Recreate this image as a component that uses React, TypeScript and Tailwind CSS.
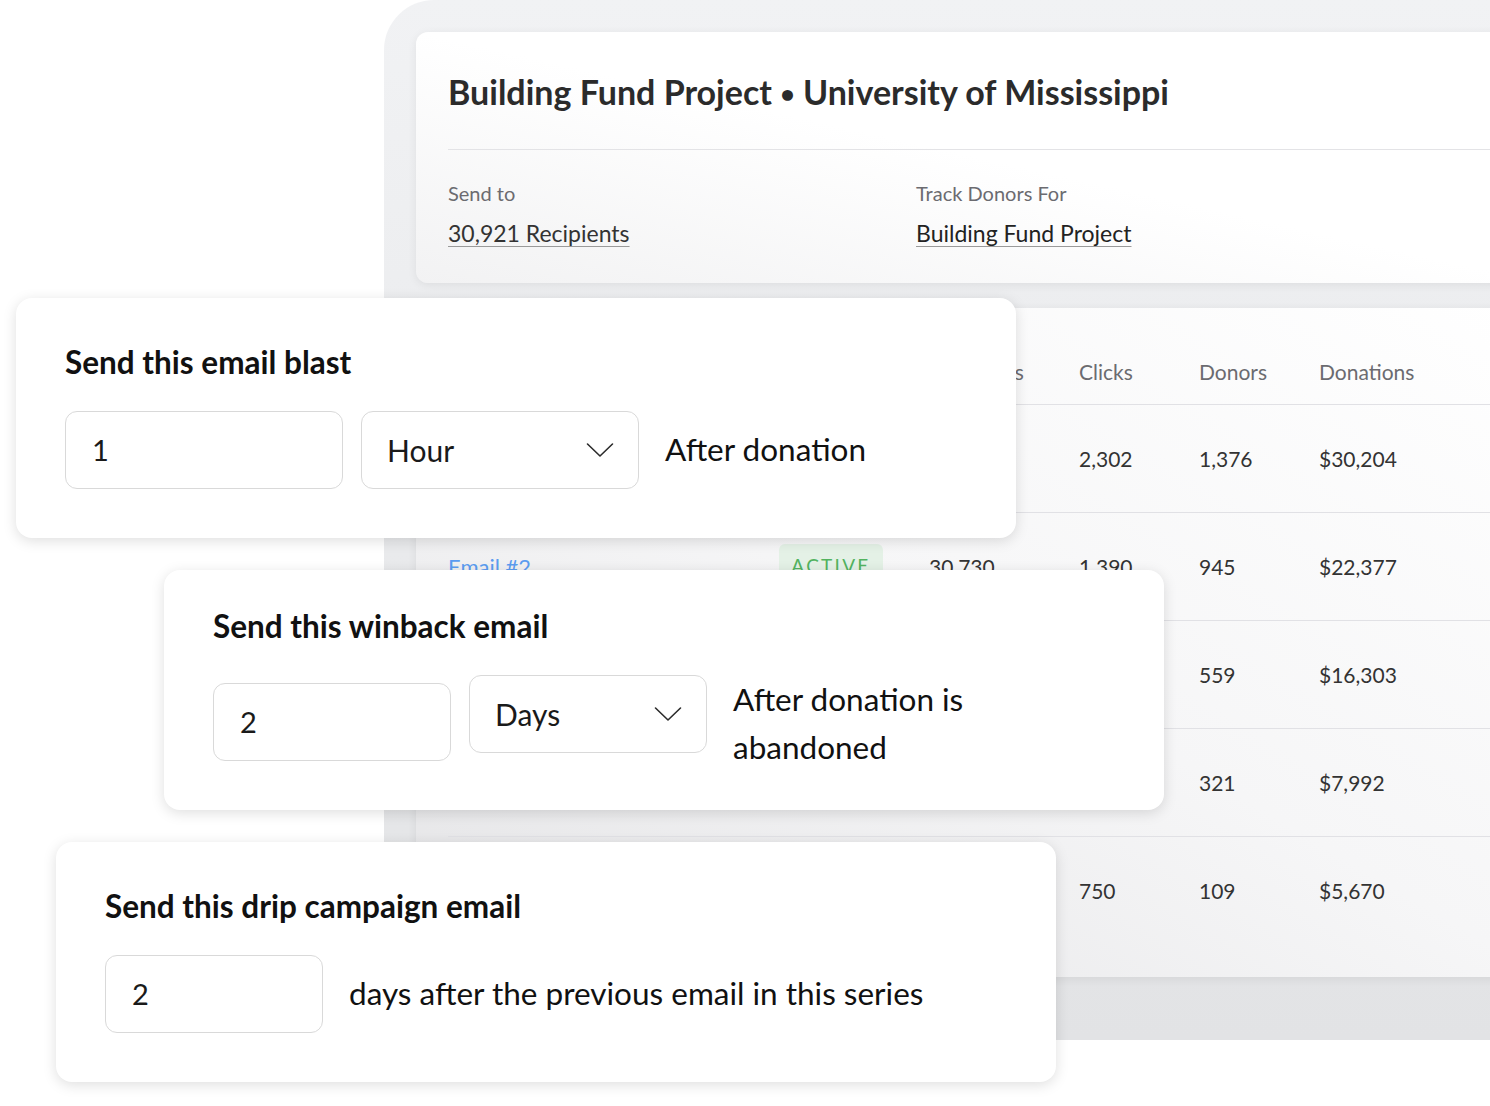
import React from "react";

const rows = [
  { name: "Email #1", sent: "30,921", clicks: "2,302", donors: "1,376", amount: "$30,204" },
  { name: "Email #2", sent: "30,730", clicks: "1,390", donors: "945", amount: "$22,377" },
  { name: "Email #3", sent: "30,512", clicks: "1,024", donors: "559", amount: "$16,303" },
  { name: "Email #4", sent: "30,401", clicks: "880", donors: "321", amount: "$7,992" },
  { name: "Email #5", sent: "30,250", clicks: "750", donors: "109", amount: "$5,670" },
];

const cols = "grid grid-cols-[331px_150px_150px_120px_120px_1fr]";

function Chevron() {
  return (
    <svg width="28" height="16" viewBox="0 0 28 16" fill="none">
      <path d="M1.5 2 L14 14 L26.5 2" stroke="#2b2b2b" strokeWidth="1.6" strokeLinecap="round" strokeLinejoin="round" />
    </svg>
  );
}

function NumberBox({ value, width }: { value: string; width: string }) {
  return (
    <div className={`${width} h-[78px] shrink-0 rounded-xl border-[1.5px] border-[#d9d9d9] bg-white flex items-center pl-[26px] text-[29px] text-[#1a1a1a]`}>
      {value}
    </div>
  );
}

function SelectBox({ value, width }: { value: string; width: string }) {
  return (
    <div className={`${width} h-[78px] shrink-0 rounded-xl border-[1.5px] border-[#d9d9d9] bg-white flex items-center justify-between pl-[25px] pr-[24px] text-[30px] text-[#1a1a1a]`}>
      <span>{value}</span>
      <Chevron />
    </div>
  );
}

function FloatCard({ pos, children }: { pos: string; children: React.ReactNode }) {
  return (
    <div className={`absolute ${pos} w-[1000px] h-[240px] rounded-2xl bg-white shadow-[0_3px_14px_rgba(0,0,0,0.13)] pl-[49px]`}>
      {children}
    </div>
  );
}

export default function App() {
  return (
    <div className="relative w-[1490px] h-[1106px] overflow-hidden bg-white" style={{ fontFamily: "Lato, 'Noto Sans', sans-serif" }}>
      {/* app backdrop */}
      <div className="absolute left-[384px] top-0 w-[1160px] h-[1040px] rounded-tl-[50px] bg-linear-to-b from-[#f1f2f4] to-[#e2e3e5] pl-8 pt-8 flex flex-col gap-[25px]">
        <div className="h-[251px] rounded-xl bg-linear-to-tr from-[#f2f2f3] via-white to-white shadow-[0_2px_10px_rgba(0,0,0,0.07)] pl-8 pt-10">
          <h1 className="text-[34px] leading-10 font-bold text-[#2b2b2b]">
            Building Fund Project <span className="text-[25px] align-[2px]">•</span> University of Mississippi
          </h1>
          <div className="mt-9 border-t-[1.5px] border-[#e3e3e6]" />
          <div className="flex mt-[31px]">
            <div className="w-[468px]">
              <div className="text-[20px] leading-6 text-[#6b6b70]">Send to</div>
              <div className="mt-[14px] text-[23px] leading-7 text-[#333] underline decoration-[#9a9a9a] decoration-1 underline-offset-4">30,921 Recipients</div>
            </div>
            <div>
              <div className="text-[20px] leading-6 text-[#6b6b70]">Track Donors For</div>
              <div className="mt-[14px] text-[23px] leading-7 text-[#222] underline decoration-[#9a9a9a] decoration-1 underline-offset-4">Building Fund Project</div>
            </div>
          </div>
        </div>

        <div className="h-[669px] rounded-xl bg-linear-to-bl from-white via-[#f6f6f7] to-[#e4e4e6] shadow-[0_2px_10px_rgba(0,0,0,0.07)] pl-8">
          <div className={`${cols} pt-[52px] pb-5 border-b-[1.5px] border-[#e1e1e5] text-[21px] leading-6 text-[#6b6b70]`}>
            <span>Email</span>
            <span>Status</span>
            <span>Recipients</span>
            <span>Clicks</span>
            <span>Donors</span>
            <span>Donations</span>
          </div>
          {rows.map((r, i) => (
            <div
              key={r.name}
              className={`${cols} h-[108px] items-center text-[21px] text-[#333] ${i < rows.length - 1 ? "border-b-[1.5px] border-[#e1e1e5]" : ""}`}
            >
              <span className="text-[22px] text-[#5b9cf0]">{r.name}</span>
              <span>
                <span className="inline-block w-[104px] rounded-md bg-[#e4f1e6] py-2 text-center text-[19px] tracking-[0.12em] text-[#52b35f]">ACTIVE</span>
              </span>
              <span>{r.sent}</span>
              <span>{r.clicks}</span>
              <span>{r.donors}</span>
              <span>{r.amount}</span>
            </div>
          ))}
        </div>
      </div>

      {/* floating settings cards */}
      <FloatCard pos="left-[16px] top-[298px]">
        <div className="pt-12">
          <h2 className="text-[31.5px] leading-8 font-bold text-[#111]">Send this email blast</h2>
          <div className="mt-[33px] flex items-center">
            <NumberBox value="1" width="w-[278px]" />
            <div className="ml-[18px]">
              <SelectBox value="Hour" width="w-[278px]" />
            </div>
            <span className="ml-[26px] text-[31.5px] text-[#111]">After donation</span>
          </div>
        </div>
      </FloatCard>

      <FloatCard pos="left-[164px] top-[570px]">
        <div className="pt-10">
          <h2 className="text-[31.5px] leading-8 font-bold text-[#111]">Send this winback email</h2>
          <div className="mt-[33px] flex items-start">
            <div className="mt-2">
              <NumberBox value="2" width="w-[238px]" />
            </div>
            <div className="ml-[18px]">
              <SelectBox value="Days" width="w-[238px]" />
            </div>
            <span className="ml-[26px] text-[31.5px] leading-[48px] text-[#111]">
              After donation is
              <br />
              abandoned
            </span>
          </div>
        </div>
      </FloatCard>

      <FloatCard pos="left-[56px] top-[842px]">
        <div className="pt-12">
          <h2 className="text-[31.5px] leading-8 font-bold text-[#111]">Send this drip campaign email</h2>
          <div className="mt-[33px] flex items-center">
            <NumberBox value="2" width="w-[218px]" />
            <span className="ml-[26px] text-[31.5px] text-[#111]">days after the previous email in this series</span>
          </div>
        </div>
      </FloatCard>
    </div>
  );
}
